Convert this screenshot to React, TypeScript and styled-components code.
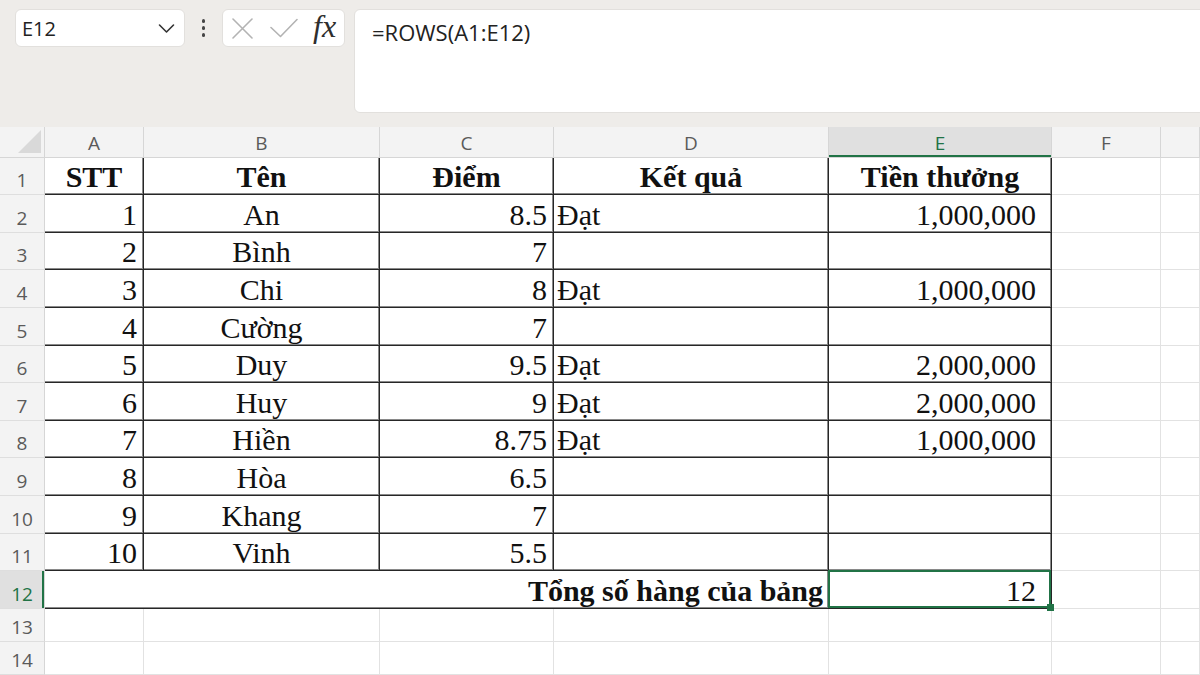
import React from 'react';
import styled, { createGlobalStyle, css } from 'styled-components';

const GREEN = '#217346';
const GRID = '#e2e2e2';
const HEAD_BG = '#f3f3f3';
const HEAD_SEL = '#e0e0e0';
const HEAD_LINE = '#d6d6d6';
const BORDER = '#262626';

const GlobalStyle = createGlobalStyle`
  html, body { margin: 0; padding: 0; background: #ffffff; overflow: hidden; }
  #root { width: 1200px; height: 675px; }
`;

const Page = styled.div`
  display: flex;
  flex-direction: column;
  width: 1200px;
  height: 675px;
  overflow: hidden;
`;

const TopBar = styled.div`
  height: 127px;
  box-sizing: border-box;
  background: #eeece9;
  display: flex;
  align-items: flex-start;
  padding: 9px 0 0 15px;
  font-family: "Open Sans", "Noto Sans", sans-serif;
  overflow: hidden;
`;

const Box = styled.div`
  height: 38px;
  box-sizing: border-box;
  background: #ffffff;
  border: 1px solid #e2e0dd;
  border-radius: 6px;
  display: flex;
  align-items: center;
`;

const NameBox = styled(Box)`
  width: 170px;
  justify-content: space-between;
  padding: 0 9px 0 6px;
  font-size: 20px;
  color: #222222;
`;

const Kebab = styled.div`
  width: 37px;
  height: 38px;
  display: flex;
  flex-direction: column;
  align-items: center;
  justify-content: center;
  gap: 3.5px;
`;

const Dot = styled.span`
  width: 3.5px;
  height: 3.5px;
  border-radius: 50%;
  background: #454545;
`;

const FxBox = styled(Box)`
  width: 123px;
  padding: 0 0 0 9px;
`;

const FxText = styled.span`
  font-family: "Liberation Serif", "DejaVu Serif", serif;
  font-style: italic;
  font-size: 32px;
  line-height: 31px;
  color: #2e2e2e;
  margin-left: 15px;
  margin-top: -3px;
`;

const FormulaBox = styled.div`
  margin-left: 9px;
  flex: 1;
  margin-right: -12px;
  height: 104px;
  box-sizing: border-box;
  background: #ffffff;
  border: 1px solid #e2e0dd;
  border-radius: 6px;
  padding: 7px 0 0 17px;
  font-size: 22px;
  line-height: 30px;
  color: #222222;
`;

const Sheet = styled.div`
  display: grid;
  grid-template-columns: 45px 99px 236px 174px 275px 223px 109px 1fr;
  grid-template-rows: 31px 37px 38px 37px 38px 38px 37px 38px 37px 38px 38px 37px 38px 33px 33px;
  background: #ffffff;
`;

const Corner = styled.div`
  position: relative;
  background: ${HEAD_BG};
  border-right: 1px solid ${HEAD_LINE};
  border-bottom: 1px solid ${HEAD_LINE};
  &::after {
    content: "";
    position: absolute;
    right: 3px;
    bottom: 4px;
    width: 0;
    height: 0;
    border-left: 23px solid transparent;
    border-bottom: 23px solid #d9d9d9;
  }
`;

const headText = css`
  font-family: "Open Sans", "Noto Sans", sans-serif;
  font-size: 19px;
  line-height: 19px;
  box-sizing: border-box;
  display: flex;
  justify-content: center;
  align-items: flex-end;
`;

const ColHead = styled.div<{ $sel?: boolean }>`
  ${headText};
  padding-bottom: 4px;
  background: ${(p) => (p.$sel ? HEAD_SEL : HEAD_BG)};
  color: ${(p) => (p.$sel ? GREEN : '#5a5a5a')};
  border-right: 1px solid ${HEAD_LINE};
  border-bottom: 1px solid ${HEAD_LINE};
  ${(p) => p.$sel && css`box-shadow: inset 0 -2px 0 ${GREEN};`}
`;

const RowHead = styled.div<{ $sel?: boolean }>`
  ${headText};
  padding-bottom: 4px;
  background: ${(p) => (p.$sel ? HEAD_SEL : HEAD_BG)};
  color: ${(p) => (p.$sel ? GREEN : '#5a5a5a')};
  border-right: 1px solid ${HEAD_LINE};
  border-bottom: 1px solid #dedede;
  ${(p) => p.$sel && css`box-shadow: inset -2px 0 0 ${GREEN};`}
`;

type Align = 'left' | 'center' | 'right';

const Cell = styled.div<{ $align?: Align; $bold?: boolean; $table?: boolean; $span?: number; $padR?: number }>`
  position: relative;
  box-sizing: border-box;
  display: flex;
  align-items: flex-end;
  justify-content: ${(p) =>
    p.$align === 'center' ? 'center' : p.$align === 'right' ? 'flex-end' : 'flex-start'};
  padding: 0 ${(p) => p.$padR ?? 6}px 2px 3px;
  font-family: "Liberation Serif", "Times New Roman", serif;
  font-size: 30px;
  line-height: 30px;
  font-weight: ${(p) => (p.$bold ? 700 : 400)};
  color: #111111;
  white-space: nowrap;
  border-right: 1px solid ${(p) => (p.$table ? BORDER : GRID)};
  border-bottom: 1px solid ${(p) => (p.$table ? BORDER : GRID)};
  ${(p) => p.$table && css`box-shadow: inset -1px -1px 0 rgba(40, 40, 40, 0.55);`}
  ${(p) => p.$span && css`grid-column: span ${p.$span};`}
`;

const Selection = styled.div`
  position: absolute;
  top: -1px;
  left: -1px;
  right: 0;
  bottom: 0;
  border: 2px solid ${GREEN};
  pointer-events: none;
  z-index: 2;
`;

const FillHandle = styled.div`
  position: absolute;
  right: -3px;
  bottom: -3px;
  width: 7px;
  height: 7px;
  background: ${GREEN};
  z-index: 3;
`;

const cols = ['A', 'B', 'C', 'D', 'E', 'F', ''];

const headers = ['STT', 'Tên', 'Điểm', 'Kết quả', 'Tiền thưởng'];

const data: [string, string, string, string, string][] = [
  ['1', 'An', '8.5', 'Đạt', '1,000,000'],
  ['2', 'Bình', '7', '', ''],
  ['3', 'Chi', '8', 'Đạt', '1,000,000'],
  ['4', 'Cường', '7', '', ''],
  ['5', 'Duy', '9.5', 'Đạt', '2,000,000'],
  ['6', 'Huy', '9', 'Đạt', '2,000,000'],
  ['7', 'Hiền', '8.75', 'Đạt', '1,000,000'],
  ['8', 'Hòa', '6.5', '', ''],
  ['9', 'Khang', '7', '', ''],
  ['10', 'Vinh', '5.5', '', ''],
];

const Chevron = () => (
  <svg width="17" height="11" viewBox="0 0 17 11" fill="none">
    <polyline points="1.5,2 8.5,9 15.5,2" stroke="#333" strokeWidth="1.6" strokeLinecap="round" strokeLinejoin="round" />
  </svg>
);

const XIcon = () => (
  <svg width="21" height="21" viewBox="0 0 21 21" fill="none">
    <path d="M1 1 L20 20 M20 1 L1 20" stroke="#b3b3b3" strokeWidth="1.6" strokeLinecap="round" />
  </svg>
);

const CheckIcon = () => (
  <svg width="28" height="20" viewBox="0 0 28 20" fill="none" style={{ marginLeft: 17 }}>
    <polyline points="1,9.5 10.5,18.5 27,1.5" stroke="#b3b3b3" strokeWidth="1.6" strokeLinecap="round" strokeLinejoin="round" />
  </svg>
);

const Blank = ({ n }: { n: number }) => (
  <>
    {Array.from({ length: n }).map((_, i) => (
      <Cell key={i} />
    ))}
  </>
);

export default function App() {
  return (
    <Page>
      <GlobalStyle />
      <TopBar>
        <NameBox>
          <span>E12</span>
          <Chevron />
        </NameBox>
        <Kebab>
          <Dot />
          <Dot />
          <Dot />
        </Kebab>
        <FxBox>
          <XIcon />
          <CheckIcon />
          <FxText>fx</FxText>
        </FxBox>
        <FormulaBox>=ROWS(A1:E12)</FormulaBox>
      </TopBar>
      <Sheet>
        <Corner />
        {cols.map((c, i) => (
          <ColHead key={i} $sel={c === 'E'}>
            {c}
          </ColHead>
        ))}

        <RowHead>1</RowHead>
        {headers.map((h) => (
          <Cell key={h} $table $bold $align="center" $padR={3}>
            {h}
          </Cell>
        ))}
        <Blank n={2} />

        {data.map((r, i) => (
          <React.Fragment key={i}>
            <RowHead>{i + 2}</RowHead>
            <Cell $table $align="right">{r[0]}</Cell>
            <Cell $table $align="center" $padR={3}>{r[1]}</Cell>
            <Cell $table $align="right">{r[2]}</Cell>
            <Cell $table $align="left">{r[3]}</Cell>
            <Cell $table $align="right" $padR={15}>{r[4]}</Cell>
            <Blank n={2} />
          </React.Fragment>
        ))}

        <RowHead $sel>12</RowHead>
        <Cell $table $span={4} $bold $align="right" $padR={5}>
          Tổng số hàng của bảng
        </Cell>
        <Cell $table $align="right" $padR={15}>
          12
          <Selection />
          <FillHandle />
        </Cell>
        <Blank n={2} />

        <RowHead>13</RowHead>
        <Blank n={7} />
        <RowHead>14</RowHead>
        <Blank n={7} />
      </Sheet>
    </Page>
  );
}
